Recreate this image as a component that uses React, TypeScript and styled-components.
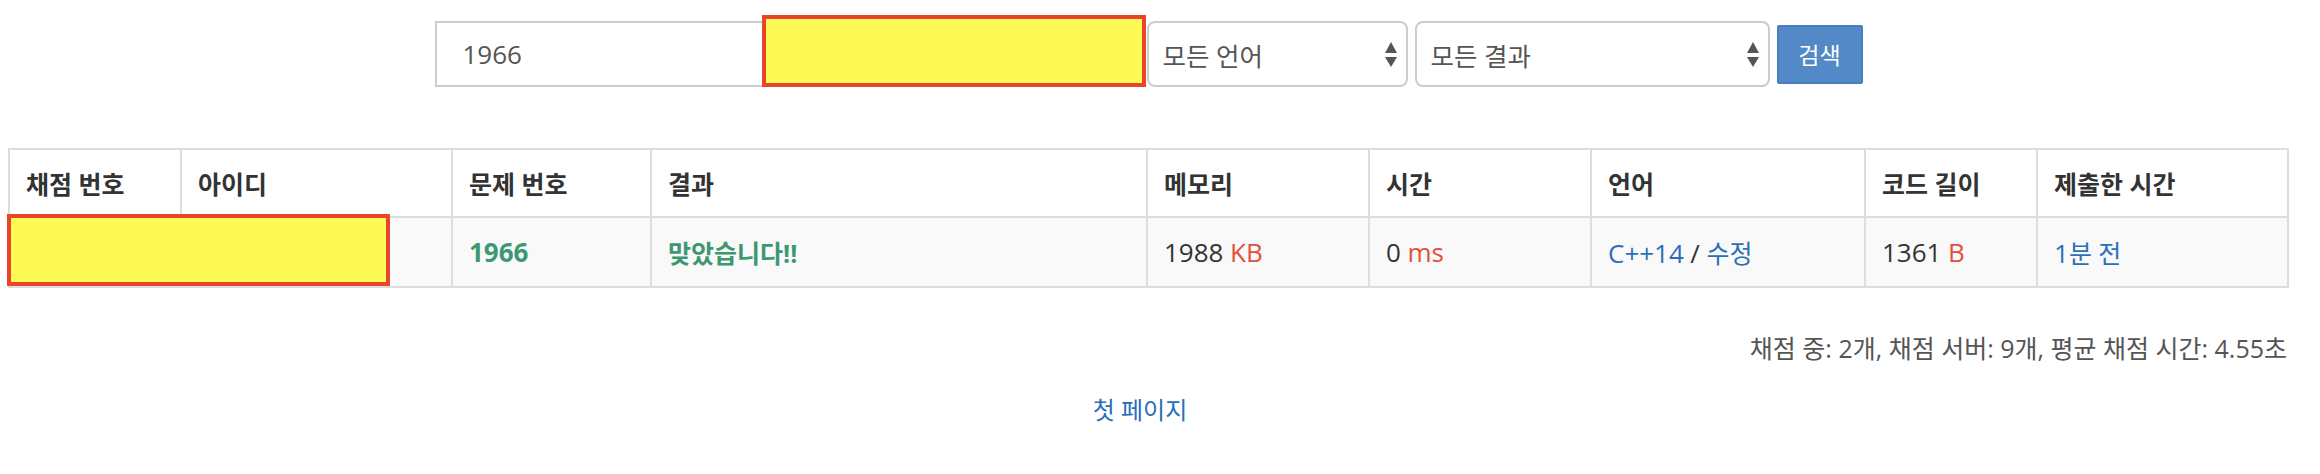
import styled, { createGlobalStyle } from "styled-components";

const GlobalStyle = createGlobalStyle`
  body {
    margin: 0;
    background: #fff;
    color: #333;
    font-family: "Open Sans", "Noto Sans CJK KR", sans-serif;
    font-size: 25px;
  }
`;

const Page = styled.div`
  width: 2281px;
  margin-left: 8px;
  padding-top: 21px;
`;

const SearchForm = styled.form`
  position: relative;
  display: flex;
  align-items: center;
  justify-content: center;
  gap: 7px;
  margin: 0;
`;

const TextInput = styled.input<{ $w: number }>`
  box-sizing: border-box;
  width: ${(p) => p.$w}px;
  height: 66px;
  padding: 0 26px;
  border: 2px solid #ccc;
  border-radius: 0;
  background: #fff;
  font: 26px "Open Sans", "Noto Sans CJK KR", sans-serif;
  color: #555;
  outline: none;
`;

const SelectBox = styled.div<{ $w: number }>`
  box-sizing: border-box;
  width: ${(p) => p.$w}px;
  height: 66px;
  display: flex;
  align-items: center;
  justify-content: space-between;
  padding: 0 9px 0 14px;
  border: 2px solid #ccc;
  border-radius: 8px;
  background: #fff;
  font-size: 25.5px;
  color: #555;
`;

const Button = styled.button`
  box-sizing: border-box;
  width: 86px;
  height: 59px;
  border: 2px solid #4a7dba;
  border-radius: 2px;
  background: #5289c6;
  color: #fff;
  font: 23px "Open Sans", "Noto Sans CJK KR", sans-serif;
  padding: 0;
`;

const Redact = styled.div<{ $left: number; $top: number; $w: number; $h: number }>`
  position: absolute;
  box-sizing: border-box;
  left: ${(p) => p.$left}px;
  top: ${(p) => p.$top}px;
  width: ${(p) => p.$w}px;
  height: ${(p) => p.$h}px;
  background: #fdf955;
  border: 4px solid #e8452c;
`;

const TableWrap = styled.div`
  position: relative;
  margin-top: 61px;
`;

const Table = styled.table`
  width: 100%;
  table-layout: fixed;
  border-collapse: collapse;
  border: 2px solid #ddd;
`;

const Col = styled.col<{ $w: number }>`
  width: ${(p) => p.$w}px;
`;

const Th = styled.th`
  height: 66px;
  padding: 0 16px;
  border: 2px solid #ddd;
  text-align: left;
  font-weight: 700;
  color: #333;
  background: #fff;
`;

const Tr = styled.tr`
  background: #f9f9f9;
`;

const Td = styled.td`
  height: 68px;
  padding: 0 16px;
  border: 2px solid #ddd;
  color: #333;
`;

const Num = styled.span`
  font-size: 26px;
`;

const Green = styled.a`
  color: #3d9872;
  font-weight: 700;
  text-decoration: none;
`;

const Unit = styled.span`
  font-size: 26px;
  color: #e0503c;
`;

const Link = styled.a<{ $big?: boolean }>`
  color: #2a70b9;
  text-decoration: none;
  font-size: ${(p) => (p.$big ? "26px" : "inherit")};
`;

const Stats = styled.div`
  margin-top: 43px;
  padding-right: 2px;
  text-align: right;
  font-size: 25px;
  line-height: 34px;
  color: #555;
`;

const Pager = styled.div`
  margin-top: 27px;
  padding-right: 17px;
  text-align: center;
  line-height: 34px;
`;

const PageLink = styled.a`
  color: #2a6ebb;
  font-size: 24px;
  text-decoration: none;
`;

function Arrows() {
  return (
    <svg width="12" height="25" viewBox="0 0 12 25">
      <polygon points="0,11 6,0 12,11" fill="#555" />
      <polygon points="0,15 12,15 6,25" fill="#555" />
    </svg>
  );
}

const cols = [172, 271, 199, 496, 222, 222, 274, 172, 251];
const heads = ["채점 번호", "아이디", "문제 번호", "결과", "메모리", "시간", "언어", "코드 길이", "제출한 시간"];

export default function App() {
  return (
    <>
      <GlobalStyle />
      <Page>
        <SearchForm onSubmit={(e) => e.preventDefault()}>
          <TextInput $w={347} defaultValue="1966" />
          <TextInput $w={351} defaultValue="" />
          <SelectBox $w={261}>
            모든 언어
            <Arrows />
          </SelectBox>
          <SelectBox $w={355}>
            모든 결과
            <Arrows />
          </SelectBox>
          <Button type="submit">검색</Button>
          <Redact $left={754} $top={-6} $w={384} $h={72} />
        </SearchForm>

        <TableWrap>
          <Table>
            <colgroup>
              {cols.map((w, i) => (
                <Col key={i} $w={w} />
              ))}
            </colgroup>
            <thead>
              <tr>
                {heads.map((h) => (
                  <Th key={h}>{h}</Th>
                ))}
              </tr>
            </thead>
            <tbody>
              <Tr>
                <Td />
                <Td />
                <Td>
                  <Green href="#">
                    <Num>1966</Num>
                  </Green>
                </Td>
                <Td>
                  <Green as="span">맞았습니다!!</Green>
                </Td>
                <Td>
                  <Num>1988</Num> <Unit>KB</Unit>
                </Td>
                <Td>
                  <Num>0</Num> <Unit>ms</Unit>
                </Td>
                <Td>
                  <Link $big href="#">C++14</Link> <Num>/</Num> <Link href="#">수정</Link>
                </Td>
                <Td>
                  <Num>1361</Num> <Unit>B</Unit>
                </Td>
                <Td>
                  <Link href="#">
                    <Num>1</Num>분 전
                  </Link>
                </Td>
              </Tr>
            </tbody>
          </Table>
          <Redact $left={-1} $top={66} $w={383} $h={72} />
        </TableWrap>

        <Stats>채점 중: 2개, 채점 서버: 9개, 평균 채점 시간: 4.55초</Stats>

        <Pager>
          <PageLink href="#">첫 페이지</PageLink>
        </Pager>
      </Page>
    </>
  );
}
